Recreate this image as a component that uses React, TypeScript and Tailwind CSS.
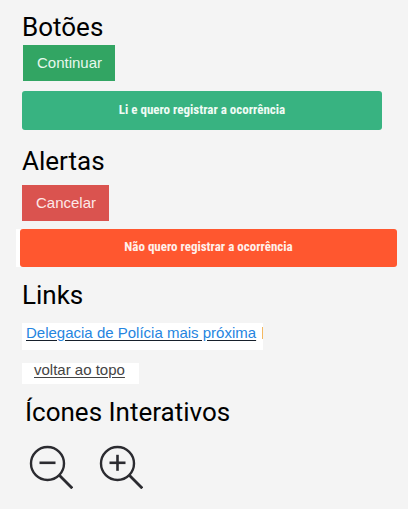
import type { ReactNode } from "react";

function Heading({ children }: { children: ReactNode }) {
  return (
    <h2 className="font-['Roboto',sans-serif] text-[26px] leading-8 text-black">
      {children}
    </h2>
  );
}

function ZoomIcon({ plus = false }: { plus?: boolean }) {
  return (
    <svg
      className="block size-11"
      viewBox="0 0 44 44"
      fill="none"
      stroke="#2b2b30"
      aria-hidden="true"
    >
      <circle cx="18.5" cy="18.5" r="16.5" strokeWidth="2.4" />
      <path d="M30.3 30.3L43.3 43.3" strokeWidth="2.8" />
      <path d="M10.5 17.8H26.5" strokeWidth="2.6" />
      {plus && <path d="M18.5 9.8V25.8" strokeWidth="2.6" />}
    </svg>
  );
}

export default function App() {
  return (
    <main className="min-h-screen bg-[#f4f4f4] pt-[11px] pr-[11px] pb-5 pl-[22px] font-['Liberation_Sans',Arial,sans-serif]">
      <section className="flex flex-col items-start">
        <Heading>Botões</Heading>
        <button
          type="button"
          className="mt-0.5 ml-px h-9 bg-[#32a563] pr-[13px] pl-3.5 text-[15px] text-[#e8f8ed]"
        >
          Continuar
        </button>
        <div className="mt-2.5 w-full pr-[15px]">
          <button
            type="button"
            className="block h-[39px] w-full rounded-[3px] bg-[#38b381] pb-0.5 font-['Roboto_Condensed','Roboto',sans-serif] text-[13px] font-bold text-[#f0fbf5]"
          >
            Li e quero registrar a ocorrência
          </button>
        </div>
      </section>

      <section className="mt-[15px] flex flex-col items-start">
        <Heading>Alertas</Heading>
        <button
          type="button"
          className="mt-2 h-9 bg-[#da534f] pr-[13px] pl-3.5 text-[15px] text-[#fde9e8]"
        >
          Cancelar
        </button>
        <div className="mt-2 -ml-1.5 self-stretch bg-gradient-to-r from-white from-50% to-transparent to-50% pl-1">
          <button
            type="button"
            className="block h-[38px] w-full rounded-[3px] bg-[#ff572f] pb-0.5 font-['Roboto_Condensed','Roboto',sans-serif] text-[13px] font-bold text-[#fff0eb]"
          >
            Não quero registrar a ocorrência
          </button>
        </div>
      </section>

      <section className="mt-3 flex flex-col items-start">
        <Heading>Links</Heading>
        <div className="mt-3 flex h-[27px] bg-white pl-1 text-[15px] leading-5">
          <a
            href="#delegacia"
            className="text-[#2585df] underline decoration-[#17202c] underline-offset-2"
          >
            Delegacia de Polícia mais próxima
          </a>
          <span className="mt-1 ml-1.5 h-3 w-px bg-[#f4b860]" />
        </div>
        <div className="mt-[13px] flex h-[21px] bg-white pr-3.5 pl-3 text-[15px] leading-[14px]">
          <a href="#topo" className="text-[#444444] underline underline-offset-2">
            voltar ao topo
          </a>
        </div>
      </section>

      <section className="mt-3 pl-[3px]">
        <Heading>Ícones Interativos</Heading>
        <div className="mt-[17px] flex gap-[26px] pl-1">
          <button type="button" aria-label="Diminuir zoom">
            <ZoomIcon />
          </button>
          <button type="button" aria-label="Aumentar zoom">
            <ZoomIcon plus />
          </button>
        </div>
      </section>
    </main>
  );
}
